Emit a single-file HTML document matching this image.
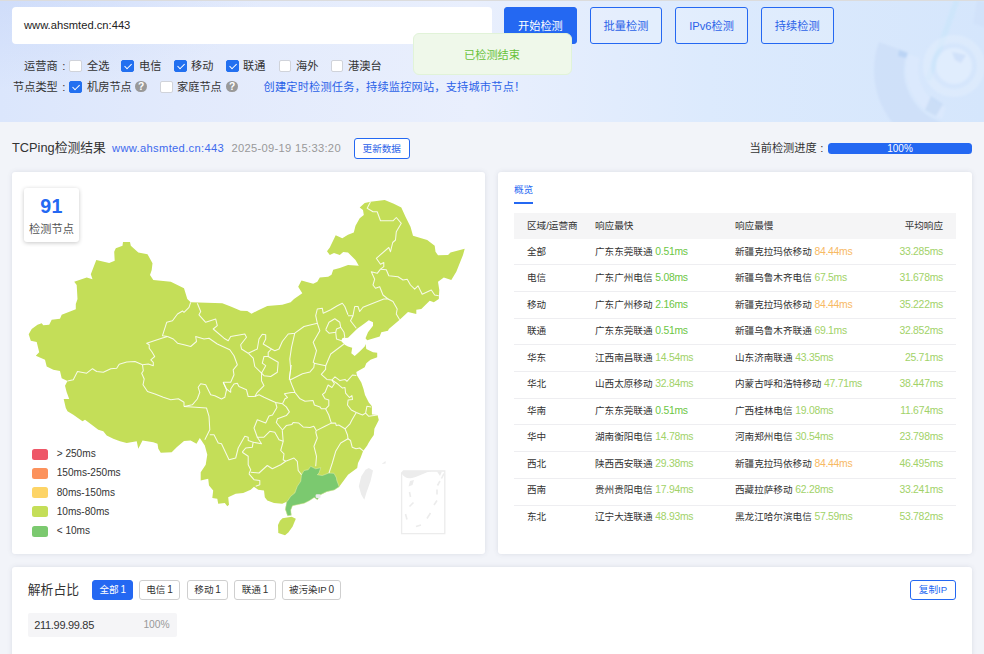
<!DOCTYPE html>
<html lang="zh-CN">
<head>
<meta charset="utf-8">
<title>TCPing检测</title>
<style>
*{box-sizing:border-box;margin:0;padding:0}
html,body{width:984px;height:654px;overflow:hidden}
body{background:#f2f4f9;font-family:"Liberation Sans","Noto Sans CJK SC",sans-serif;color:#333;font-size:11.2px;position:relative}
.abs{position:absolute}
#hdr{left:0;top:0;width:984px;height:122px;background:radial-gradient(ellipse 260px 90px at 0 0,rgba(196,212,248,.5) 0%,rgba(196,212,248,0) 100%),linear-gradient(90deg,#dbe6fc 0%,#e2eafc 18%,#e9effd 48%,#dceafd 72%,#d5e6fc 100%);overflow:hidden}
#topline{left:0;top:0;width:984px;height:1px;background:#dcdcdc}
#inp{left:12px;top:7px;width:480px;height:37px;background:#fff;border-radius:4px;line-height:37px;padding-left:12px;font-size:11.2px;color:#222}
.btn{top:7px;height:37px;width:72.8px;border-radius:3px;border:1px solid #2468f2;color:#2b62e8;background:rgba(255,255,255,.15);text-align:center;line-height:37px;font-size:11.2px}
.btn.pri{background:#2468f2;color:#fff}
#toast{left:412.5px;top:33px;width:159.5px;height:41.5px;background:#eff8ea;border:1px solid #e1f3d8;border-radius:6px;color:#67c23a;font-size:11.2px;line-height:42.5px;padding-left:50.5px}
.row{left:0;height:16px;line-height:16px;font-size:11.2px;color:#333;white-space:nowrap}
.cb{position:absolute;width:12.6px;height:12.6px;border:1px solid #d0d3da;border-radius:2px;background:#fff}
.cb.on{background:#2270f0;border-color:#2270f0}
.cb.on:after{content:"";position:absolute;left:3.5px;top:1.2px;width:3.2px;height:6.2px;border:solid #fff;border-width:0 1.3px 1.3px 0;transform:rotate(45deg)}
.lbl{position:absolute;top:0}
.q{position:absolute;width:11.8px;height:11.8px;border-radius:50%;background:#999;color:#fff;font-size:10.2px;line-height:12px;font-style:normal;text-align:center;font-weight:bold}
.card{background:#fff;border-radius:3px;box-shadow:0 0 5px rgba(70,80,110,.13)}
.tc{height:16px;line-height:16px;font-size:9.6px;color:#333;white-space:nowrap}
.ms{font-size:10.4px;letter-spacing:-.26px}
.lg{height:16px;line-height:16px;font-size:10.1px;color:#333;white-space:nowrap}
.tag{top:580.2px;height:19.5px;line-height:18.3px;border:1px solid #cfcfcf;border-radius:3px;background:#fff;color:#333;font-size:9.6px;text-align:center;white-space:nowrap}
.tag b{font-weight:normal;margin-left:1.8px;font-size:10px}
.tag.on{background:#2468f2;border-color:#2468f2;color:#fff}
.tag.blue{border-color:#2468f2;color:#2468f2}
</style>
</head>
<body>
<div id="hdr" class="abs"><svg width="984" height="122" viewBox="0 0 984 122" style="position:absolute;left:0;top:0">
<defs><filter id="bl" x="-20%" y="-20%" width="140%" height="140%"><feGaussianBlur stdDeviation="1.2"/></filter></defs>
<g fill="none" filter="url(#bl)">
<path d="M893 47 A70 70 0 0 0 938 137" stroke="#c9dcf7" stroke-opacity=".6" stroke-width="30"/>
<path d="M914 56 A46 46 0 0 0 944 113" stroke="#dfecfd" stroke-opacity=".5" stroke-width="12"/>
<path d="M957 0 L928 80" stroke="#c6e4fa" stroke-opacity=".45" stroke-width="6"/>
<path d="M975 12 A58 58 0 0 1 994 120" stroke="#cbddf7" stroke-opacity=".4" stroke-width="24"/>
<circle cx="954" cy="66" r="27" stroke="#e4effd" stroke-opacity=".45" stroke-width="8"/>
<circle cx="954" cy="66" r="18" fill="#e4effd" fill-opacity=".7"/>
<path d="M931 96 L943 104 L936 116 L925 110 Z" fill="#bcd3f3" fill-opacity=".5"/>
<path d="M899 50 L908 53 L906 58 L898 56 Z" fill="#b3d0f4" fill-opacity=".7"/>
<path d="M952 52 L966 55 L961 63 L955 60 Z" fill="#bcd3f3" fill-opacity=".45"/>
</g></svg></div>
<div id="topline" class="abs"></div>
<div id="inp" class="abs">www.ahsmted.cn:443</div>
<div class="abs btn pri" style="left:504px">开始检测</div>
<div class="abs btn" style="left:589.6px">批量检测</div>
<div class="abs btn" style="left:675.2px">IPv6检测</div>
<div class="abs btn" style="left:760.8px">持续检测</div>

<div class="abs row" id="row1" style="top:58px">
  <span class="lbl" style="left:24px">运营商</span><span class="lbl" style="left:62.3px">:</span>
  <i class="cb" style="left:69.3px;top:1.5px"></i><span class="lbl" style="left:87px">全选</span>
  <i class="cb on" style="left:121.3px;top:1.5px"></i><span class="lbl" style="left:139px">电信</span>
  <i class="cb on" style="left:174px;top:1.5px"></i><span class="lbl" style="left:191px">移动</span>
  <i class="cb on" style="left:226.3px;top:1.5px"></i><span class="lbl" style="left:243px">联通</span>
  <i class="cb" style="left:278.6px;top:1.5px"></i><span class="lbl" style="left:296px">海外</span>
  <i class="cb" style="left:330.8px;top:1.5px"></i><span class="lbl" style="left:348px">港澳台</span>
</div>
<div class="abs row" id="row2" style="top:79px">
  <span class="lbl" style="left:13px">节点类型</span><span class="lbl" style="left:62.3px">:</span>
  <i class="cb on" style="left:69.3px;top:1.5px"></i><span class="lbl" style="left:87px">机房节点</span><i class="q" style="left:135.2px;top:1.6px">?</i>
  <i class="cb" style="left:160.3px;top:1.5px"></i><span class="lbl" style="left:177px">家庭节点</span><i class="q" style="left:226.3px;top:1.5px">?</i>
  <span class="lbl" style="left:263.5px;color:#2b62e8;letter-spacing:.2px">创建定时检测任务，持续监控网站，支持城市节点！</span>
</div>
<div id="toast" class="abs">已检测结束</div>

<!-- title row -->
<div class="abs" id="ttl" style="left:12px;top:139px;height:18px;line-height:18px;font-size:12.8px;color:#333;white-space:nowrap">TCPing检测结果</div>
<div class="abs" id="turl" style="left:112px;top:139px;height:18px;line-height:18px;font-size:11.2px;color:#3d6aee;letter-spacing:.32px;white-space:nowrap">www.ahsmted.cn:443</div>
<div class="abs" id="ttime" style="left:231.5px;top:139px;height:18px;line-height:18px;font-size:11.2px;color:#999;letter-spacing:.29px;white-space:nowrap">2025-09-19 15:33:20</div>
<div class="abs" id="upd" style="left:354px;top:138px;width:55.5px;height:20.5px;border:1px solid #2468f2;border-radius:3px;color:#2b62e8;font-size:9.6px;line-height:19px;text-align:center;background:#fff">更新数据</div>
<div class="abs" id="plabel" style="left:749.5px;top:139px;height:18px;line-height:18px;font-size:11.2px;color:#333;white-space:nowrap">当前检测进度<span style="margin-left:3.6px">:</span></div>
<div class="abs" id="pbar" style="left:828px;top:143px;width:144px;height:10.8px;border-radius:3.5px;background:#2468f2;color:#fff;font-size:10px;line-height:11px;text-align:center">100%</div>

<!-- cards -->
<div class="abs card" id="mapcard" style="left:12px;top:172px;width:473px;height:382px"></div>
<div class="abs card" id="tblcard" style="left:498px;top:172px;width:474px;height:382px"></div>
<div class="abs card" id="botcard" style="left:12px;top:566.8px;width:960px;height:100px"></div>
<!-- table -->
<div class="abs" style="left:514px;top:181px;height:17px;line-height:17px;font-size:9.6px;color:#2468f2">概览</div>
<div class="abs" style="left:514px;top:201.8px;width:19px;height:2px;background:#2468f2"></div>
<div class="abs" style="left:514px;top:213px;width:442px;height:25.7px;background:#f5f5f6"></div>
<div class="abs tc" style="left:527px;top:218.00px">区域/运营商</div>
<div class="abs tc" style="left:595px;top:218.00px">响应最快</div>
<div class="abs tc" style="left:735px;top:218.00px">响应最慢</div>
<div class="abs tc" style="right:41px;top:218.00px;text-align:right">平均响应</div>
<div class="abs tc" style="left:527px;top:244.00px">全部</div>
<div class="abs tc" style="left:595px;top:244.00px">广东东莞联通 <span class="ms" style="color:#6cc644">0.51ms</span></div>
<div class="abs tc" style="left:735px;top:244.00px">新疆克拉玛依移动 <span class="ms" style="color:#f7b964">84.44ms</span></div>
<div class="abs tc" style="right:41px;top:244.00px;text-align:right"><span class="ms" style="color:#a1d268">33.285ms</span></div>
<div class="abs" style="left:514px;top:264.20px;width:442px;height:1px;background:#eeeef1"></div>
<div class="abs tc" style="left:527px;top:270.45px">电信</div>
<div class="abs tc" style="left:595px;top:270.45px">广东广州电信 <span class="ms" style="color:#6cc644">5.08ms</span></div>
<div class="abs tc" style="left:735px;top:270.45px">新疆乌鲁木齐电信 <span class="ms" style="color:#a1d268">67.5ms</span></div>
<div class="abs tc" style="right:41px;top:270.45px;text-align:right"><span class="ms" style="color:#a1d268">31.678ms</span></div>
<div class="abs" style="left:514px;top:290.90px;width:442px;height:1px;background:#eeeef1"></div>
<div class="abs tc" style="left:527px;top:296.90px">移动</div>
<div class="abs tc" style="left:595px;top:296.90px">广东广州移动 <span class="ms" style="color:#6cc644">2.16ms</span></div>
<div class="abs tc" style="left:735px;top:296.90px">新疆克拉玛依移动 <span class="ms" style="color:#f7b964">84.44ms</span></div>
<div class="abs tc" style="right:41px;top:296.90px;text-align:right"><span class="ms" style="color:#a1d268">35.222ms</span></div>
<div class="abs" style="left:514px;top:317.60px;width:442px;height:1px;background:#eeeef1"></div>
<div class="abs tc" style="left:527px;top:323.35px">联通</div>
<div class="abs tc" style="left:595px;top:323.35px">广东东莞联通 <span class="ms" style="color:#6cc644">0.51ms</span></div>
<div class="abs tc" style="left:735px;top:323.35px">新疆乌鲁木齐联通 <span class="ms" style="color:#a1d268">69.1ms</span></div>
<div class="abs tc" style="right:41px;top:323.35px;text-align:right"><span class="ms" style="color:#a1d268">32.852ms</span></div>
<div class="abs" style="left:514px;top:344.30px;width:442px;height:1px;background:#eeeef1"></div>
<div class="abs tc" style="left:527px;top:349.80px">华东</div>
<div class="abs tc" style="left:595px;top:349.80px">江西南昌联通 <span class="ms" style="color:#a1d268">14.54ms</span></div>
<div class="abs tc" style="left:735px;top:349.80px">山东济南联通 <span class="ms" style="color:#a1d268">43.35ms</span></div>
<div class="abs tc" style="right:41px;top:349.80px;text-align:right"><span class="ms" style="color:#a1d268">25.71ms</span></div>
<div class="abs" style="left:514px;top:371.00px;width:442px;height:1px;background:#eeeef1"></div>
<div class="abs tc" style="left:527px;top:376.25px">华北</div>
<div class="abs tc" style="left:595px;top:376.25px">山西太原移动 <span class="ms" style="color:#a1d268">32.84ms</span></div>
<div class="abs tc" style="left:735px;top:376.25px">内蒙古呼和浩特移动 <span class="ms" style="color:#a1d268">47.71ms</span></div>
<div class="abs tc" style="right:41px;top:376.25px;text-align:right"><span class="ms" style="color:#a1d268">38.447ms</span></div>
<div class="abs" style="left:514px;top:397.70px;width:442px;height:1px;background:#eeeef1"></div>
<div class="abs tc" style="left:527px;top:402.70px">华南</div>
<div class="abs tc" style="left:595px;top:402.70px">广东东莞联通 <span class="ms" style="color:#6cc644">0.51ms</span></div>
<div class="abs tc" style="left:735px;top:402.70px">广西桂林电信 <span class="ms" style="color:#a1d268">19.08ms</span></div>
<div class="abs tc" style="right:41px;top:402.70px;text-align:right"><span class="ms" style="color:#a1d268">11.674ms</span></div>
<div class="abs" style="left:514px;top:424.40px;width:442px;height:1px;background:#eeeef1"></div>
<div class="abs tc" style="left:527px;top:429.15px">华中</div>
<div class="abs tc" style="left:595px;top:429.15px">湖南衡阳电信 <span class="ms" style="color:#a1d268">14.78ms</span></div>
<div class="abs tc" style="left:735px;top:429.15px">河南郑州电信 <span class="ms" style="color:#a1d268">30.54ms</span></div>
<div class="abs tc" style="right:41px;top:429.15px;text-align:right"><span class="ms" style="color:#a1d268">23.798ms</span></div>
<div class="abs" style="left:514px;top:451.10px;width:442px;height:1px;background:#eeeef1"></div>
<div class="abs tc" style="left:527px;top:455.60px">西北</div>
<div class="abs tc" style="left:595px;top:455.60px">陕西西安联通 <span class="ms" style="color:#a1d268">29.38ms</span></div>
<div class="abs tc" style="left:735px;top:455.60px">新疆克拉玛依移动 <span class="ms" style="color:#f7b964">84.44ms</span></div>
<div class="abs tc" style="right:41px;top:455.60px;text-align:right"><span class="ms" style="color:#a1d268">46.495ms</span></div>
<div class="abs" style="left:514px;top:477.80px;width:442px;height:1px;background:#eeeef1"></div>
<div class="abs tc" style="left:527px;top:482.05px">西南</div>
<div class="abs tc" style="left:595px;top:482.05px">贵州贵阳电信 <span class="ms" style="color:#a1d268">17.94ms</span></div>
<div class="abs tc" style="left:735px;top:482.05px">西藏拉萨移动 <span class="ms" style="color:#a1d268">62.28ms</span></div>
<div class="abs tc" style="right:41px;top:482.05px;text-align:right"><span class="ms" style="color:#a1d268">33.241ms</span></div>
<div class="abs" style="left:514px;top:504.50px;width:442px;height:1px;background:#eeeef1"></div>
<div class="abs tc" style="left:527px;top:508.50px">东北</div>
<div class="abs tc" style="left:595px;top:508.50px">辽宁大连联通 <span class="ms" style="color:#a1d268">48.93ms</span></div>
<div class="abs tc" style="left:735px;top:508.50px">黑龙江哈尔滨电信 <span class="ms" style="color:#a1d268">57.59ms</span></div>
<div class="abs tc" style="right:41px;top:508.50px;text-align:right"><span class="ms" style="color:#a1d268">53.782ms</span></div>
<!-- map -->
<svg class="abs" style="left:0;top:0" width="984" height="654" viewBox="0 0 984 654">
<path d="M77.5 299.0 L76.7 285.0 L74.2 281.7 L86.7 277.5 L92.5 279.2 L90.8 274.2 L96.3 260.0 L109.2 263.0 L114.7 260.8 L114.2 251.7 L115.8 248.3 L122.5 245.8 L123.0 242.0 L130.0 242.0 L130.8 245.8 L138.3 252.5 L147.5 254.2 L152.5 263.3 L151.7 270.0 L150.0 275.0 L153.3 280.0 L170.8 281.7 L184.0 288.3 L187.3 299.0 L190.7 302.3 L222.3 303.2 L230.7 306.5 L240.7 310.7 L247.3 311.0 L251.5 313.7 L257.3 310.7 L267.3 306.0 L282.3 304.8 L290.7 302.3 L294.0 299.0 L302.3 293.3 L298.2 286.7 L301.5 280.5 L313.2 283.7 L317.3 281.7 L319.8 277.5 L328.2 276.7 L331.5 274.7 L333.2 269.7 L339.8 268.0 L348.0 265.0 L358.8 265.8 L355.5 260.0 L348.0 252.5 L343.2 252.0 L339.8 255.0 L334.0 253.0 L329.8 255.0 L327.0 251.3 L329.8 247.5 L335.7 235.3 L342.3 238.3 L348.0 234.7 L353.8 232.5 L355.5 225.8 L359.7 218.3 L363.8 215.0 L363.0 210.0 L359.7 207.5 L364.7 203.0 L370.5 201.7 L384.7 200.0 L393.8 203.7 L401.3 207.5 L405.5 216.7 L410.5 226.7 L413.0 235.8 L421.3 238.3 L427.2 240.0 L434.7 245.8 L435.5 251.7 L438.0 255.3 L448.0 255.0 L450.5 252.5 L464.7 248.7 L463.0 255.0 L459.7 263.3 L456.3 271.7 L451.3 280.0 L443.8 277.5 L438.0 281.7 L439.3 290.0 L438.8 299.0 L433.8 302.3 L429.7 300.7 L421.3 309.0 L416.3 309.8 L416.3 314.0 L408.0 312.0 L399.7 319.8 L388.8 329.0 L388.0 330.7 L381.3 332.3 L379.7 336.5 L367.2 340.3 L365.5 338.2 L368.0 332.3 L373.0 325.7 L373.0 322.3 L368.8 320.3 L363.8 324.0 L357.2 328.7 L348.0 337.7 L342.3 338.2 L341.5 341.5 L344.8 344.8 L348.0 346.5 L352.2 347.7 L351.3 353.2 L354.7 356.0 L359.7 351.5 L364.7 346.5 L365.5 344.0 L366.3 349.0 L373.0 352.3 L377.2 352.7 L377.2 357.3 L370.5 359.8 L366.3 363.2 L364.7 367.3 L356.3 371.9 L357.0 375.6 L361.3 382.5 L363.5 389.0 L365.0 395.0 L368.8 402.5 L371.9 406.3 L371.9 414.4 L377.5 415.0 L378.8 420.0 L374.4 428.8 L373.8 435.0 L371.0 439.0 L368.8 442.5 L367.2 445.5 L363.0 451.3 L360.5 458.0 L358.0 463.0 L357.2 468.0 L348.0 474.7 L339.2 486.7 L334.2 490.0 L326.7 491.7 L320.0 495.0 L317.5 499.7 L314.2 497.5 L309.2 500.8 L304.2 503.3 L292.5 505.8 L290.8 510.0 L291.3 515.3 L287.5 515.8 L285.3 509.2 L286.7 501.7 L282.3 503.8 L274.0 503.0 L267.3 500.5 L264.8 497.2 L264.0 490.5 L258.2 489.7 L254.0 486.7 L250.7 489.7 L243.2 493.0 L235.7 493.8 L228.2 497.2 L229.0 504.7 L227.3 506.3 L224.8 503.0 L218.2 503.8 L217.3 498.8 L212.3 498.0 L213.2 490.5 L209.0 485.5 L208.2 478.8 L200.7 480.5 L200.7 472.2 L205.7 464.7 L207.3 454.7 L204.8 445.5 L199.8 438.0 L196.5 443.8 L190.7 440.5 L184.0 441.0 L176.7 447.2 L171.7 452.2 L160.8 452.7 L158.3 448.8 L157.5 443.8 L153.3 442.2 L142.5 440.5 L138.3 448.8 L136.7 441.3 L126.7 443.0 L120.0 441.3 L113.3 438.8 L106.7 435.5 L103.3 431.3 L98.3 429.7 L91.7 424.7 L85.0 419.7 L82.5 421.3 L73.3 414.7 L67.5 411.3 L65.8 408.0 L63.7 399.0 L69.2 399.0 L66.7 392.3 L65.0 385.7 L67.5 381.0 L61.7 378.2 L60.0 371.0 L53.3 369.8 L46.7 366.5 L45.0 359.8 L35.8 355.7 L39.2 352.3 L36.7 342.0 L30.8 340.7 L28.7 334.3 L31.7 329.0 L37.5 324.8 L41.7 323.2 L43.3 325.3 L49.2 324.8 L51.7 319.8 L60.0 318.7 L61.7 314.8 L75.8 309.3 L75.8 304.0 Z" fill="#c4de58"/>
<path d="M282.5 518.3 L291.7 516.7 L295.8 518.7 L292.5 526.7 L288.3 532.5 L285.0 535.3 L278.3 533.0 L278.0 525.0 L280.0 520.8 Z" fill="#c4de58"/>
<path d="M339.2 486.7 L334.2 490.0 L326.7 491.7 L320.0 495.0 L317.5 499.7 L314.2 497.5 L309.2 500.8 L304.2 503.3 L292.5 505.8 L290.8 510.0 L291.3 515.3 L287.5 515.8 L285.3 509.2 L286.7 501.7 L287.3 501.3 L290.7 496.3 L294.8 493.0 L297.3 486.3 L300.7 481.3 L301.5 474.7 L304.0 470.5 L308.2 469.7 L310.7 466.3 L315.7 468.8 L320.7 467.7 L319.0 473.0 L317.3 474.7 L322.3 475.5 L329.0 473.0 L334.0 473.3 L336.5 478.0 L336.7 480.0 Z" fill="#7bc96f" stroke="#e4efb4" stroke-width=".5"/>
<path d="M368.8 468.0 L373.0 470.5 L370.5 481.3 L366.3 493.0 L364.3 499.7 L361.3 494.7 L358.8 486.3 L361.3 476.3 L365.5 469.7 Z" fill="#ececec"/>
<rect x="315.6" y="494.2" width="5" height="3.8" rx="1.2" fill="#ececec"/>
<path d="M381.6 464 L385.6 461 L385.6 463.6 Z" fill="#ececec"/>
<g fill="none" stroke="#fff" stroke-opacity=".85" stroke-width="1.05" stroke-linejoin="round">
<path d="M370.5 201.7 L367.2 208.3 L373.0 211.7 L377.2 211.7 L380.5 220.8 L393.0 220.8 L396.3 217.5 L401.3 223.3 L396.3 231.7 L395.5 240.0 L392.7 242.5 L390.5 251.7 L388.8 247.5 L376.3 258.3 L380.5 264.2 L383.8 262.5 L383.8 266.7 L380.5 269.2"/>
<path d="M380.5 269.2 L386.3 269.7 L388.8 275.8 L398.0 276.7 L403.0 280.0 L407.2 279.2 L410.5 285.0 L414.7 289.2 L418.0 285.8 L422.2 294.2 L431.3 290.0 L434.7 295.0 L438.8 295.8"/>
<path d="M380.5 269.2 L377.2 273.3 L371.3 271.7 L374.7 279.2 L373.0 285.0 L375.5 288.3 L379.7 286.7 L383.0 295.0 L388.0 299.0 L383.8 299.0 L373.0 303.2 L363.0 307.3 L359.7 311.5 L358.0 306.5 L354.7 306.5 L353.0 315.7 L348.0 315.7"/>
<path d="M388.0 299.0 L393.0 301.5 L397.2 309.0 L396.3 314.0 L399.7 319.8"/>
<path d="M353.0 315.7 L350.5 320.7 L356.3 328.2"/>
<path d="M67.5 381.0 L73.3 379.8 L77.5 371.5 L86.7 373.2 L92.5 368.7 L96.7 371.5 L103.3 372.3 L110.8 368.7 L116.7 368.2 L119.2 364.3 L126.7 362.0 L135.0 361.5 L142.5 364.8"/>
<path d="M142.5 364.8 L148.3 364.0 L153.3 365.7 L153.3 362.3 L150.8 359.8 L154.7 356.5 L151.7 351.5 L149.2 348.2 L149.2 344.8 L146.7 343.2 L161.7 338.2 L167.5 336.5"/>
<path d="M167.5 336.5 L162.5 335.7 L166.7 322.3 L172.5 320.7 L177.5 314.0 L182.5 311.0 L184.0 312.3 L189.0 307.3 L190.7 302.3"/>
<path d="M167.5 336.5 L173.3 339.0 L177.5 343.2 L184.0 344.8 L190.7 346.5 L196.5 341.5 L195.7 336.5 L204.0 339.0 L209.0 338.2 L217.3 344.0 L229.8 349.8 L234.0 355.7 L237.3 364.8 L233.2 369.8 L234.0 374.8 L230.7 382.3 L223.2 382.3"/>
<path d="M142.5 364.8 L143.3 370.7 L141.7 373.2 L144.2 379.0 L143.0 384.8 L147.5 391.5 L155.0 394.0 L163.3 397.3 L170.8 399.8 L178.3 398.7 L184.0 402.3 L184.0 406.5"/>
<path d="M223.2 382.3 L226.5 389.8 L224.8 397.3 L221.5 399.0 L214.8 395.7 L210.7 394.8 L205.7 384.8 L200.7 383.7 L198.2 387.3 L199.8 392.3 L197.3 399.0 L192.3 404.8 L184.0 406.5"/>
<path d="M223.2 382.3 L226.5 389.0 L230.7 392.3 L230.7 389.0 L234.0 384.0 L237.3 383.2 L239.0 386.5 L246.5 389.8 L248.2 396.5 L254.8 396.5"/>
<path d="M197.3 303.2 L200.7 311.5 L199.0 314.8 L205.7 322.3 L215.7 319.0 L217.3 325.7 L213.2 329.0 L224.0 338.2 L228.2 340.7 L230.7 336.5 L244.8 334.0 L246.5 337.3 L240.7 344.8 L241.5 349.0 L248.2 353.2"/>
<path d="M248.2 353.2 L257.3 349.0 L259.0 339.0 L262.3 334.3 L265.7 334.8 L265.7 339.0 L263.2 344.0 L271.5 349.0 L268.2 352.3 L268.2 356.5 L264.0 356.5 L262.3 363.2 L265.7 365.7 L261.5 373.2 L254.8 366.5 L253.2 358.2 L248.2 353.2"/>
<path d="M271.5 349.0 L274.8 350.7 L279.0 349.0 L282.3 341.5 L288.2 334.0 L294.8 333.2 L304.0 326.5 L317.3 323.2 L315.7 315.7 L317.3 309.0 L322.3 308.2 L323.2 313.2 L330.7 309.8 L337.3 305.7 L342.3 303.2 L344.8 306.5 L348.0 314.8"/>
<path d="M294.8 333.2 L291.5 347.3 L289.8 359.0 L290.7 369.0 L289.3 379.8"/>
<path d="M317.3 323.2 L319.8 330.7 L313.2 342.3 L316.5 350.7 L313.2 362.3 L314.4 363.2"/>
<path d="M268.2 356.5 L278.2 362.3 L277.3 372.3 L270.7 376.5 L264.0 375.7 L261.5 373.2 L261.5 380.7 L264.0 385.7 L257.3 392.3 L254.8 396.5"/>
<path d="M325.7 329.8 L329.0 322.3 L334.8 318.7 L339.8 322.3 L340.7 327.3 L336.5 329.0 L335.7 332.3 L329.0 333.2 L325.7 329.8"/>
<path d="M340.7 327.3 L344.0 332.3 L344.8 337.3 L341.5 340.7 L336.5 339.0 L335.7 332.3"/>
<path d="M314.0 363.2 L325.7 365.7 L330.7 354.0 L344.0 344.0"/>
<path d="M184.0 406.5 L192.0 407.0 L206.5 408.0 L209.0 416.3 L209.8 429.7 L204.8 439.7"/>
<path d="M209.8 434.7 L214.0 434.7 L218.2 443.0 L221.5 443.8 L229.0 459.7 L235.7 458.0 L238.2 448.0 L244.8 436.3 L248.2 437.2 L248.2 440.5 L253.2 442.2 L252.3 447.2 L245.7 448.0 L242.3 452.2"/>
<path d="M242.3 452.2 L248.2 456.3 L248.2 464.7 L250.7 469.7 L249.0 473.8"/>
<path d="M249.0 473.8 L254.0 479.7 L259.8 480.5 L259.8 484.7 L255.7 486.3"/>
<path d="M250.7 472.2 L259.0 473.0 L267.3 465.5 L272.3 468.8 L280.7 464.7 L285.7 461.3 L294.0 458.0 L297.3 461.3 L298.2 470.5 L301.5 474.7"/>
<path d="M253.2 442.2 L261.5 443.8 L257.3 437.2 L264.0 437.2 L269.8 431.3 L274.8 432.2 L279.0 439.7 L283.2 441.3"/>
<path d="M282.3 430.5 L283.2 441.3 L280.7 450.5 L284.0 453.8 L283.2 459.7 L285.7 461.3"/>
<path d="M315.7 432.2 L317.3 438.0 L314.0 446.3 L316.5 456.3 L315.7 466.3"/>
<path d="M348.0 438.8 L340.7 443.0 L335.7 451.3 L332.3 463.0 L329.0 473.0"/>
<path d="M348.0 438.8 L350.5 440.5 L352.2 447.2 L356.0 448.8 L359.7 448.0 L363.8 451.3"/>
<path d="M291.3 365.0 L289.4 377.5 L290.0 380.0"/>
<path d="M290.0 380.0 L302.5 373.8 L310.0 371.9 L313.8 367.5 L314.4 363.2"/>
<path d="M290.0 380.0 L291.9 385.0 L295.0 392.5 L300.0 398.8 L305.0 401.3 L313.1 400.6 L314.4 405.0 L320.0 406.9 L321.3 408.8 L325.6 408.8"/>
<path d="M325.7 365.7 L325.6 369.4 L321.3 374.4 L326.9 379.4 L331.9 380.0 L334.4 383.8 L331.9 387.5 L328.1 385.0 L325.0 392.5 L322.5 394.4 L325.0 398.8 L328.8 400.0 L328.8 405.6 L325.6 408.8"/>
<path d="M331.9 380.0 L335.0 376.9 L340.0 380.6 L345.0 379.4 L346.9 381.3 L352.5 375.0 L356.3 375.6"/>
<path d="M331.9 380.0 L337.5 383.8 L342.5 388.1 L345.0 387.5 L345.6 393.1 L349.4 397.5 L351.9 395.6 L352.5 399.4 L348.1 400.0 L347.5 405.0 L351.3 410.0 L356.3 412.5"/>
<path d="M356.3 412.5 L362.5 415.0 L365.6 413.1 L366.9 406.3 L371.3 406.9"/>
<path d="M365.6 413.1 L368.8 416.3 L377.5 415.0"/>
<path d="M356.3 412.5 L351.9 420.0 L350.0 423.8 L345.0 428.8"/>
<path d="M325.6 408.8 L328.8 415.0 L331.3 423.1 L335.6 423.1 L336.3 425.6 L338.8 425.0 L345.0 428.8"/>
<path d="M345.0 428.8 L347.5 435.0 L348.1 439.4"/>
<path d="M331.3 423.1 L325.0 426.3 L316.3 430.6 L315.7 432.2"/>
<path d="M316.3 430.6 L313.8 426.3 L310.0 427.5 L303.1 426.9 L298.8 423.1 L293.1 422.5 L291.9 424.4 L286.3 425.6 L282.5 430.0"/>
<path d="M282.5 430.0 L276.3 422.5 L277.5 418.8 L286.3 415.6 L289.4 411.9 L286.3 406.9 L282.5 403.8"/>
<path d="M282.5 403.8 L285.0 398.8 L287.5 397.5 L284.4 393.8 L291.3 392.5 L295.0 392.5"/>
<path d="M254.8 396.5 L259.0 394.8 L264.0 397.3 L270.0 400.0 L275.6 402.5 L282.5 403.8"/>
<path d="M275.6 402.5 L276.9 407.5 L272.5 415.0 L269.0 416.0 L265.7 423.0 L257.3 419.7 L254.0 428.0 L257.3 437.2"/>
<path d="M282.5 430.0 L282.3 430.5"/>
</g>
<g fill="none" stroke="#ececec" stroke-width="1.3"><path d="M403.5 471 H444.8 V533.6 H401.6 V473 Z"/></g>
<path d="M402 472.5 L404 471 H432 C425 472 420 476 412 478 C407 479 404 477 402 474 Z" fill="#ececec"/>
<path d="M437 471.5 H442 L440 476 Z" fill="#ececec"/>
<path d="M410 481 L414 480 L412.5 485 L408.5 486.5 Z" fill="#ececec"/>
<g fill="none" stroke="#ececec" stroke-width="1.6"><path d="M409.5 492 L410.5 497 M413.5 502.5 L409.5 506.5 M405.5 514 L407 519.5 M416 526.5 L421 525 M427 518.5 L430.5 513 M434 505 L437 500.5 M437 494.5 V489.5 M437.5 485.5 L440 481 M441.5 478.5 L444 473.5"/></g>
</svg>
<div class="abs" style="left:24px;top:188px;width:55px;height:53.5px;background:#fff;border-radius:3px;box-shadow:0 1px 4px rgba(0,0,0,.22)"></div>
<div class="abs" style="left:24px;top:195.2px;width:55px;height:22px;line-height:22px;text-align:center;font-size:19.6px;font-weight:bold;color:#2468f2;letter-spacing:.4px">91</div>
<div class="abs" style="left:24px;top:220.6px;width:55px;height:16px;line-height:16px;text-align:center;font-size:11.2px;color:#555">检测节点</div>
<div class="abs" style="left:32px;top:448.8px;width:16px;height:11px;border-radius:2.5px;background:#ee5768"></div>
<div class="abs lg" style="left:56.7px;top:446.3px">&gt; 250ms</div>
<div class="abs" style="left:32px;top:468.0px;width:16px;height:11px;border-radius:2.5px;background:#fc925c"></div>
<div class="abs lg" style="left:56.7px;top:465.4px">150ms-250ms</div>
<div class="abs" style="left:32px;top:487.1px;width:16px;height:11px;border-radius:2.5px;background:#fdd466"></div>
<div class="abs lg" style="left:56.7px;top:484.6px">80ms-150ms</div>
<div class="abs" style="left:32px;top:506.3px;width:16px;height:11px;border-radius:2.5px;background:#c4de58"></div>
<div class="abs lg" style="left:56.7px;top:503.8px">10ms-80ms</div>
<div class="abs" style="left:32px;top:525.5px;width:16px;height:11px;border-radius:2.5px;background:#7bc96f"></div>
<div class="abs lg" style="left:56.7px;top:523.2px">&lt; 10ms</div>
<!-- bottom -->
<div class="abs" style="left:27.8px;top:581px;height:18px;line-height:18px;font-size:12.8px;color:#333;white-space:nowrap">解析占比</div>
<div class="abs tag on" style="left:92.2px;width:41px">全部<b>1</b></div>
<div class="abs tag" style="left:139.1px;width:40.8px">电信<b>1</b></div>
<div class="abs tag" style="left:187.2px;width:40.8px">移动<b>1</b></div>
<div class="abs tag" style="left:234.4px;width:41.2px">联通<b>1</b></div>
<div class="abs tag" style="left:282.1px;width:58.8px">被污染IP<b>0</b></div>
<div class="abs" style="left:28px;top:613.4px;width:148.6px;height:23.2px;background:#f5f5f7;border-radius:2px"></div>
<div class="abs" style="left:34.2px;top:617.2px;height:16px;line-height:16px;font-size:11px;letter-spacing:-.3px;color:#333;white-space:nowrap">211.99.99.85</div>
<div class="abs" style="left:143.4px;top:617.4px;height:16px;line-height:16px;font-size:10.3px;color:#999;white-space:nowrap">100%</div>
<div class="abs tag blue" style="left:910px;width:46px">复制IP</div>

</body>
</html>
